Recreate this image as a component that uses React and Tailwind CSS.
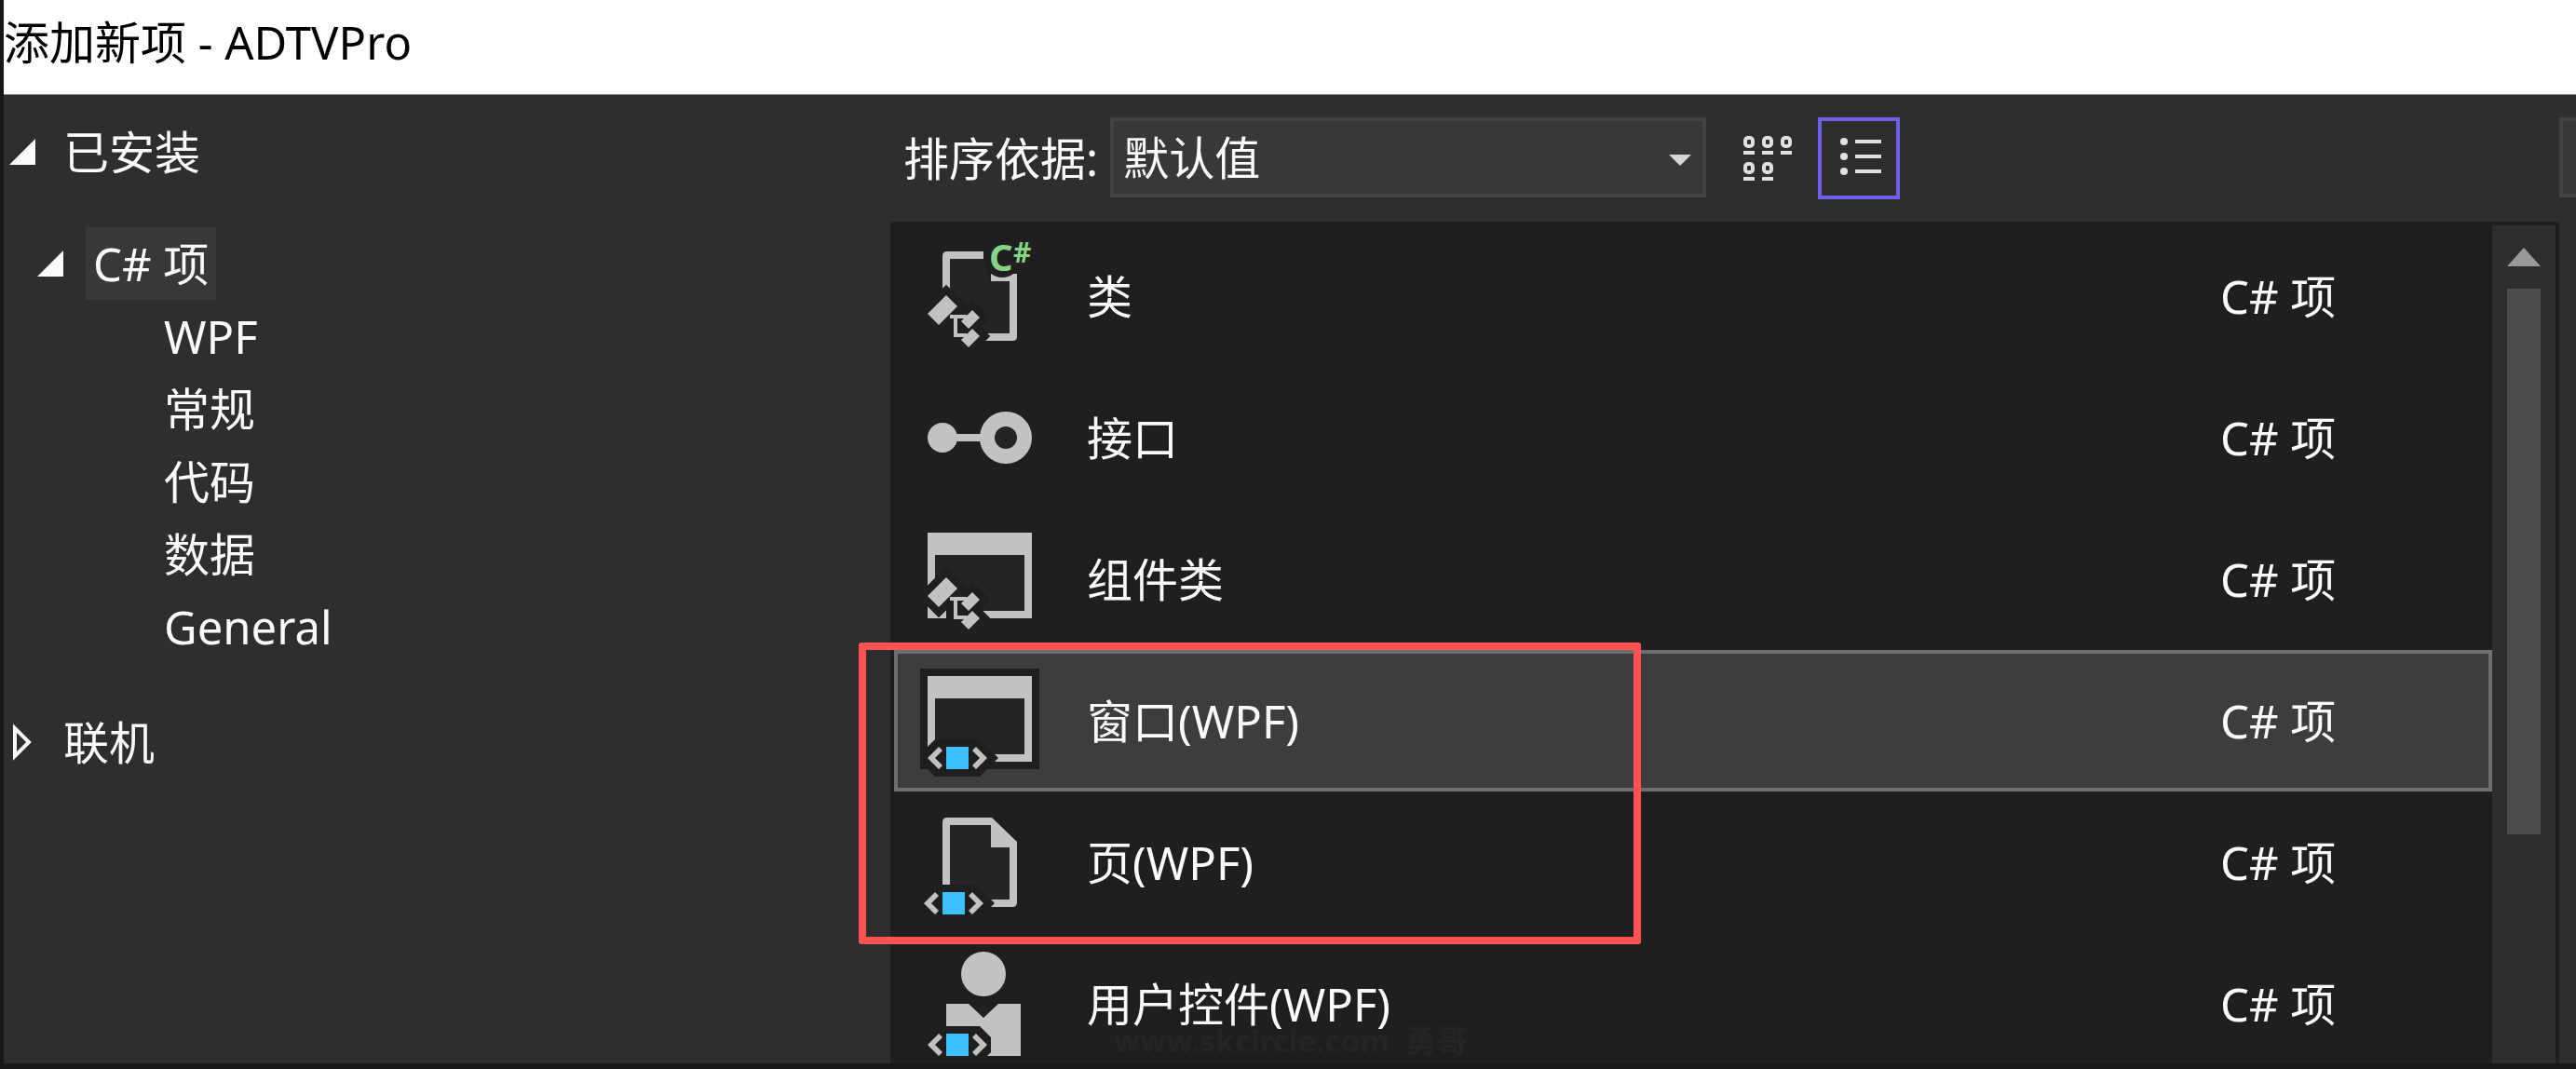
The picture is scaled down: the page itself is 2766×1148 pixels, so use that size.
import React, { useState } from 'react';
import { clsx } from 'clsx';

const categories = ['WPF', '常规', '代码', '数据', 'General'];

/* Small "<■>" badge used by the XAML based templates */
const XamlBadge = () => (
    <>
        <path d="M0 100 16 84H64L84 104 64 124H16L0 108Z" fill="#1f1f1f" />
        <path d="M8 104 20 92 24 96 16 104 24 112 20 116Z" fill="#c2c2c2" />
        <path d="M72 104 60 92 56 96 64 104 56 112 60 116Z" fill="#c2c2c2" />
        <rect x="28" y="92" width="24" height="24" fill="#3cbfff" />
    </>
);

/* Three linked diamonds */
const ClassBadge = () => (
    <>
        <g fill="#1f1f1f" stroke="#1f1f1f" strokeWidth="16">
            <path d="M28 63 40 75 20 95 8 83Z" />
            <path d="M56 79 64 87 52 99 44 91Z" />
            <path d="M56 99 64 107 52 119 44 111Z" />
            <path d="M36 84H46V108H36Z" />
        </g>
        <path d="M32 86H50M38 86V106H50" fill="none" stroke="#c2c2c2" strokeWidth="4" />
        <g fill="#c2c2c2">
            <path d="M28 63 40 75 20 95 8 83Z" />
            <path d="M56 79 64 87 52 99 44 91Z" />
            <path d="M56 99 64 107 52 119 44 111Z" />
        </g>
    </>
);

const Icon = ({ children }) => (
    <svg viewBox="0 0 128 128" className="size-32 shrink-0 overflow-visible" aria-hidden="true">
        {children}
    </svg>
);

const ClassIcon = () => (
    <Icon>
        <path d="M32 24H68L76 48H96V104H32Z" fill="#252523" />
        <path d="M24 56V21Q24 16 29 16H68V24H32V56Z" fill="#c2c2c2" />
        <path d="M76 40Q82 44 88 44Q95 44 100 40H104V108Q104 112 99 112H68V104H96V48H76Z" fill="#c2c2c2" />
        <ClassBadge />
        <text x="74" y="37" fontSize="40" fontWeight="700" fill="#85d384">C</text>
        <text x="100" y="28" fontSize="30" fontWeight="700" fill="#85d384">#</text>
    </Icon>
);

const InterfaceIcon = () => (
    <Icon>
        <path d="M24 64H70" stroke="#c2c2c2" strokeWidth="8" />
        <circle cx="24" cy="64" r="16" fill="#c2c2c2" />
        <circle cx="92" cy="64" r="20" fill="#252523" stroke="#c2c2c2" strokeWidth="16" />
    </Icon>
);

const ComponentIcon = () => (
    <Icon>
        <path d="M8 14H120V106H8Z" fill="#c2c2c2" />
        <path d="M16 38H112V98H16Z" fill="#252523" />
        <g transform="translate(0 -1)">
            <ClassBadge />
        </g>
    </Icon>
);

const WindowIcon = () => (
    <Icon>
        <path d="M0 8H128V116H0Z" fill="#1f1f1f" />
        <path d="M8 16H120V108H8Z" fill="#c2c2c2" />
        <path d="M16 40H112V100H16Z" fill="#252523" />
        <XamlBadge />
    </Icon>
);

const PageIcon = () => (
    <Icon>
        <path d="M24 88V21Q24 16 29 16H77L104 42V107Q104 112 99 112H76V88Z" fill="#c2c2c2" />
        <path d="M32 24H76V48H96V104H32Z" fill="#252523" />
        <g transform="translate(-4 4)">
            <XamlBadge />
        </g>
    </Icon>
);

const UserControlIcon = () => (
    <Icon>
        <circle cx="68" cy="32" r="24" fill="#c2c2c2" />
        <path d="M28 64H52L68 79 84 64H108V120H28Z" fill="#c2c2c2" />
        <path d="M28 88H64L76 100V116L72 120H28Z" fill="#1f1f1f" />
        <path d="M8 108 20 96 24 100 16 108 24 116 20 120Z" fill="#c2c2c2" />
        <path d="M72 108 60 96 56 100 64 108 56 116 60 120Z" fill="#c2c2c2" />
        <rect x="28" y="96" width="24" height="24" fill="#3cbfff" />
    </Icon>
);

const templates = [
    { name: '类', icon: ClassIcon },
    { name: '接口', icon: InterfaceIcon },
    { name: '组件类', icon: ComponentIcon },
    { name: '窗口(WPF)', icon: WindowIcon },
    { name: '页(WPF)', icon: PageIcon },
    { name: '用户控件(WPF)', icon: UserControlIcon },
];

const ExpandedArrow = () => (
    <svg viewBox="0 0 28 28" className="size-7 shrink-0" aria-hidden="true">
        <path d="M28 0V28H0Z" fill="#fafafa" />
    </svg>
);

const CollapsedArrow = () => (
    <svg viewBox="0 0 28 40" className="w-7 h-10 shrink-0" aria-hidden="true">
        <path d="M6 5V35L21 20Z" fill="none" stroke="#fafafa" strokeWidth="4" />
    </svg>
);

const Sidebar = () => {
    return (
        <nav className="w-[952px] shrink-0 pt-[22px] pl-[6px]">
            <button className="flex items-center gap-[30px] h-[78px]">
                <ExpandedArrow />
                <span>已安装</span>
            </button>

            <div className="pt-[42px] pb-[46px]">
                <button className="flex items-center gap-6 h-[78px] pl-[30px]">
                    <ExpandedArrow />
                    <span className="flex items-center h-[78px] px-2 bg-[#383838]">C# 项</span>
                </button>
                <ul className="pl-[166px]">
                    {categories.map((name) => (
                        <li key={name}>
                            <button className="flex items-center h-[78px]">{name}</button>
                        </li>
                    ))}
                </ul>
            </div>

            <button className="flex items-center gap-[30px] h-[78px]">
                <CollapsedArrow />
                <span>联机</span>
            </button>
        </nav>
    );
};

const Toolbar = () => {
    return (
        <div className="flex items-start h-[136px] pt-6 pl-[14px]">
            <label htmlFor="sort" className="flex items-center h-[88px] mr-[13px]">排序依据:</label>
            <div className="relative w-[640px]">
                <select
                    id="sort"
                    className="appearance-none w-full h-[86px] pl-[10px] border-4 border-[#434343] bg-[#383838] outline-none"
                >
                    <option>默认值</option>
                </select>
                <svg viewBox="0 0 24 12" className="absolute right-4 top-10 w-6 h-3 pointer-events-none" aria-hidden="true">
                    <path d="M0 0H24L12 12Z" fill="#d6d6d6" />
                </svg>
            </div>

            {/* View mode */}
            <button className="flex items-center justify-center size-[88px] ml-[22px]" aria-label="中等图标">
                <svg viewBox="0 0 52 52" className="size-13" aria-hidden="true">
                    <g fill="none" stroke="#e0e0e0" strokeWidth="4">
                        <rect x="2" y="4" width="8" height="9" rx="3" />
                        <rect x="22" y="4" width="8" height="9" rx="3" />
                        <rect x="42" y="4" width="8" height="9" rx="3" />
                        <rect x="2" y="32" width="8" height="9" rx="3" />
                        <rect x="22" y="32" width="8" height="9" rx="3" />
                        <path d="M0 20H12M20 20H32M40 20H52M0 48H12M20 48H32" />
                    </g>
                </svg>
            </button>
            <button
                className="flex items-center justify-center size-[88px] ml-[10px] border-4 border-[#7160e8]"
                aria-label="小图标"
            >
                <svg viewBox="0 0 48 48" className="size-12" aria-hidden="true">
                    <g fill="#e0e0e0">
                        <circle cx="8" cy="6" r="4" />
                        <circle cx="8" cy="22" r="4" />
                        <circle cx="8" cy="38" r="4" />
                        <path d="M20 4H48V8H20ZM20 20H48V24H20ZM20 36H48V40H20Z" />
                    </g>
                </svg>
            </button>

            <input
                type="search"
                aria-label="搜索"
                className="w-[18px] h-[86px] ml-auto border-4 border-r-0 border-[#434343] bg-[#383838] outline-none"
            />
        </div>
    );
};

const ScrollBar = () => (
    <div className="flex flex-col items-center w-[68px] shrink-0 mr-1 bg-[#2e2e2e]">
        <button className="flex items-center justify-center w-full h-[68px]" aria-label="向上滚动">
            <svg viewBox="0 0 36 20" className="w-9 h-5" aria-hidden="true">
                <path d="M18 0 36 20H0Z" fill="#999999" />
            </svg>
        </button>
        <div className="w-9 h-[586px] bg-[#4d4d4d]" />
    </div>
);

const TemplateList = () => {
    const [selected, setSelected] = useState('窗口(WPF)');

    return (
        <div className="relative flex flex-1 min-h-0 mr-[18px] pt-1 bg-[#1f1f1f]">
            <ul className="flex-1 min-w-0 pl-1 overflow-hidden">
                {templates.map(({ name, icon: TemplateIcon }) => (
                    <li key={name}>
                        <button
                            onClick={() => setSelected(name)}
                            className={clsx(
                                'flex items-center w-full h-[152px] pl-6 border-4 text-left',
                                selected === name ? 'bg-[#3d3d3d] border-[#6f6f6f]' : 'border-transparent'
                            )}
                        >
                            <TemplateIcon />
                            <span className="flex-1 pl-[51px]">{name}</span>
                            <span className="w-[288px]">C# 项</span>
                        </button>
                    </li>
                ))}
            </ul>
            <ScrollBar />

            {/* Watermark and highlight frame lie over the list */}
            <span className="absolute left-60 bottom-1 text-[33px] leading-10 font-bold text-[#252525] pointer-events-none">
                www.skcircle.com&nbsp; 勇哥
            </span>
            <div className="absolute -left-[34px] top-[452px] w-[840px] h-[324px] border-8 border-[#fc5350] rounded-[3px] pointer-events-none" />
        </div>
    );
};

export default function App() {
    return (
        <div className="flex flex-col h-screen overflow-hidden border-l-4 border-b-6 border-[#181818] bg-[#2e2e2e] text-[49px] leading-[64px] text-[#fafafa] font-['Noto_Sans','Noto_Sans_CJK_SC',sans-serif]">
            <header className="flex items-center h-[102px] shrink-0 pb-3 border-b border-[#8c8c8c] bg-white text-black">
                <h1>添加新项 - ADTVPro</h1>
            </header>
            <div className="flex flex-1 min-h-0">
                <Sidebar />
                <main className="flex flex-col flex-1 min-w-0">
                    <Toolbar />
                    <TemplateList />
                </main>
            </div>
        </div>
    );
}
